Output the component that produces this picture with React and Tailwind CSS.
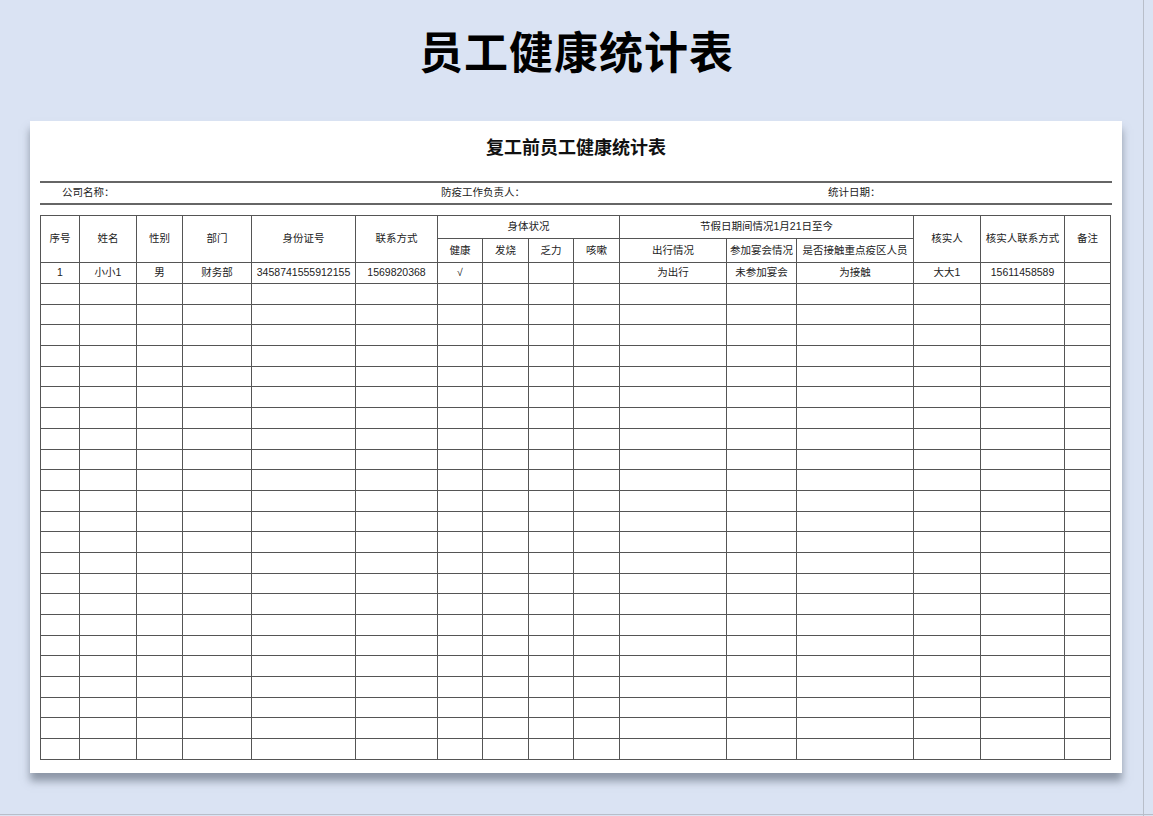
export default function App() {
  const cols = [39, 57, 46, 69, 104, 82, 45, 46, 45, 46, 107, 70, 117, 67, 84, 46];
  const cell = "border border-[#555] text-center p-0 whitespace-nowrap overflow-hidden";
  const empty = Array.from({ length: 23 });
  return (
    <div className="w-[1153px] h-[816px] bg-[#dae3f3] relative overflow-hidden" style={{ fontFamily: '"Liberation Sans","Noto Sans CJK SC",sans-serif' }}>
      <div className="absolute right-[9px] top-0 bottom-0 w-px bg-[#b8bec9]" />
      <div className="absolute left-0 right-0 bottom-[1px] h-px bg-[#b8bec9]" />
      <div className="h-[121px] flex items-center justify-center pb-[14px]">
        <h1 className="text-[44px] font-bold text-black tracking-[1px]">员工健康统计表</h1>
      </div>
      <div className="ml-[30px] w-[1092px] h-[652px] bg-white shadow-[0_8px_8px_rgba(90,100,115,0.6)] px-[10px]">
        <div className="h-[60px] flex items-center justify-center text-[18px] font-bold text-[#111] pb-[6px]">复工前员工健康统计表</div>
        <div className="border-t-2 border-b-2 border-[#666] h-[24px] flex items-center text-[10.5px] text-[#222]">
          <span className="ml-[22px] w-[379px]">公司名称：</span>
          <span className="w-[387px]">防疫工作负责人：</span>
          <span>统计日期：</span>
        </div>
        <table className="mt-[10px] border-collapse text-[10.5px] text-[#222] table-fixed" style={{ width: 1070 }}>
          <colgroup>{cols.map((w, i) => <col key={i} style={{ width: w }} />)}</colgroup>
          <tbody>
            <tr className="h-[23px]">
              <td rowSpan={2} className={cell}>序号</td>
              <td rowSpan={2} className={cell}>姓名</td>
              <td rowSpan={2} className={cell}>性别</td>
              <td rowSpan={2} className={cell}>部门</td>
              <td rowSpan={2} className={cell}>身份证号</td>
              <td rowSpan={2} className={cell}>联系方式</td>
              <td colSpan={4} className={cell}>身体状况</td>
              <td colSpan={3} className={cell}>节假日期间情况1月21日至今</td>
              <td rowSpan={2} className={cell}>核实人</td>
              <td rowSpan={2} className={cell}>核实人联系方式</td>
              <td rowSpan={2} className={cell}>备注</td>
            </tr>
            <tr className="h-[24px]">
              <td className={cell}>健康</td><td className={cell}>发烧</td><td className={cell}>乏力</td><td className={cell}>咳嗽</td>
              <td className={cell}>出行情况</td><td className={cell}>参加宴会情况</td><td className={cell}>是否接触重点疫区人员</td>
            </tr>
            <tr className="h-[21px]">
              {["1", "小小1", "男", "财务部", "3458741555912155", "1569820368", "√", "", "", "", "为出行", "未参加宴会", "为接触", "大大1", "15611458589", ""].map((t, i) => (
                <td key={i} className={cell}>{t}</td>
              ))}
            </tr>
            {empty.map((_, r) => (
              <tr key={r} className="h-[20.7px]">
                {cols.map((_, i) => <td key={i} className={cell} />)}
              </tr>
            ))}
          </tbody>
        </table>
      </div>
    </div>
  );
}
